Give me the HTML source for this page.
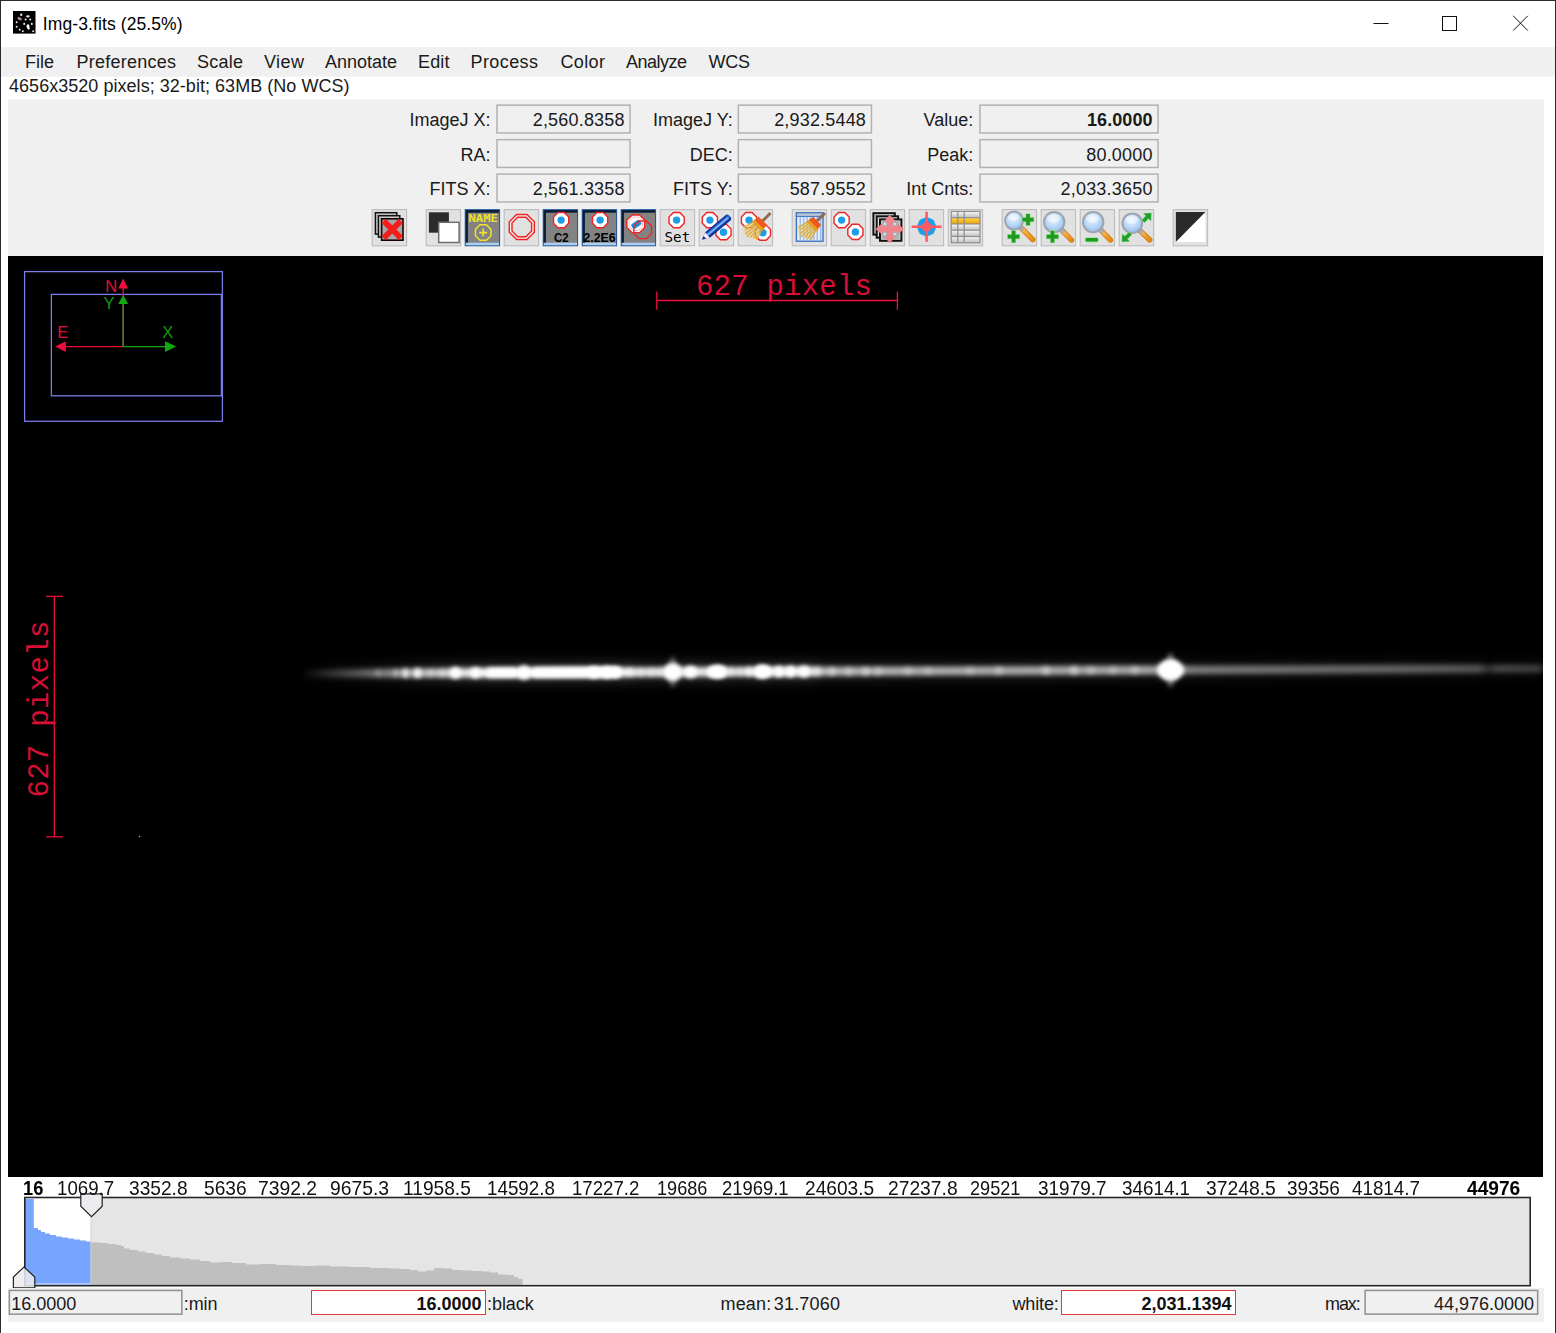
<!DOCTYPE html>
<html lang="en"><head><meta charset="utf-8"><title>Img-3.fits (25.5%)</title>
<style>
html,body{margin:0;padding:0;}
body{width:1556px;height:1333px;overflow:hidden;background:#fff;position:relative;font-family:"Liberation Sans",sans-serif;}
.a{position:absolute;box-sizing:border-box;}
.t{position:absolute;white-space:pre;line-height:1;}
svg{position:absolute;overflow:visible;}
</style></head><body>
<div class="a" style="left:0px;top:0px;width:1556px;height:1333px;background:#fff;border-left:1px solid #2b2b2b;border-top:1px solid #2b2b2b;border-right:1px solid #2b2b2b;"></div><svg style="left:13px;top:11px" width="22.5" height="22.6" viewBox="0 0 22.5 22.6"><rect width="22.5" height="22.6" fill="#000"/>
<g fill="#e4e4e4"><circle cx="8.2" cy="3.7" r="1.2"/><ellipse cx="14.9" cy="5.3" rx="1.9" ry="1.1"/><circle cx="12.6" cy="8.4" r="1"/><circle cx="17.2" cy="8.4" r="1"/><circle cx="3.7" cy="11.3" r="1"/><circle cx="11.2" cy="12.9" r="1.05"/><circle cx="18.8" cy="12.9" r="1.05"/><ellipse cx="15" cy="15.3" rx="1.4" ry="2" fill="#fff"/><ellipse cx="15.6" cy="17.3" rx="1.1" ry="1.4" fill="#fff"/><circle cx="3.7" cy="15.8" r="1"/><circle cx="6.7" cy="18.8" r="1"/><circle cx="9.8" cy="20.3" r="1"/><circle cx="20.2" cy="20.3" r="1"/></g>
<ellipse cx="6.6" cy="7.7" rx="2.3" ry="1.3" fill="#b48c8c" transform="rotate(25 6.6 7.7)"/></svg><svg style="left:0;top:0" width="1556" height="47"><g stroke="#111" stroke-width="1" fill="none">
<path d="M1373.5 23.5H1388.5"/><rect x="1442.5" y="16.5" width="14" height="14"/><path d="M1513.2 15.8L1527.8 30.6M1527.8 15.8L1513.2 30.6"/></g></svg><div class="a" style="left:1px;top:47px;width:1554px;height:29px;background:#f0f0f0;"></div><div class="a" style="left:1px;top:76px;width:1554px;height:1px;background:#f5f5f5;"></div><div class="a" style="left:8px;top:99px;width:1536px;height:157px;background:#f0f0f0;"></div><div class="a" style="left:8px;top:99px;width:1536px;height:1px;background:#f6f6f6;"></div><svg style="left:0;top:0" width="1556" height="1333"><rect x="496.95" y="105.15" width="133.1" height="27.8" fill="#f0f0f0" stroke="#b2b2b2" stroke-width="1.5"/></svg><svg style="left:0;top:0" width="1556" height="1333"><rect x="496.95" y="139.65" width="133.1" height="27.8" fill="#f0f0f0" stroke="#b2b2b2" stroke-width="1.5"/></svg><svg style="left:0;top:0" width="1556" height="1333"><rect x="496.95" y="174.15" width="133.1" height="27.8" fill="#f0f0f0" stroke="#b2b2b2" stroke-width="1.5"/></svg><svg style="left:0;top:0" width="1556" height="1333"><rect x="738.35" y="105.15" width="133.1" height="27.8" fill="#f0f0f0" stroke="#b2b2b2" stroke-width="1.5"/></svg><svg style="left:0;top:0" width="1556" height="1333"><rect x="738.35" y="139.65" width="133.1" height="27.8" fill="#f0f0f0" stroke="#b2b2b2" stroke-width="1.5"/></svg><svg style="left:0;top:0" width="1556" height="1333"><rect x="738.35" y="174.15" width="133.1" height="27.8" fill="#f0f0f0" stroke="#b2b2b2" stroke-width="1.5"/></svg><svg style="left:0;top:0" width="1556" height="1333"><rect x="979.95" y="105.15" width="178.1" height="27.8" fill="#f0f0f0" stroke="#b2b2b2" stroke-width="1.5"/></svg><svg style="left:0;top:0" width="1556" height="1333"><rect x="979.95" y="139.65" width="178.1" height="27.8" fill="#f0f0f0" stroke="#b2b2b2" stroke-width="1.5"/></svg><svg style="left:0;top:0" width="1556" height="1333"><rect x="979.95" y="174.15" width="178.1" height="27.8" fill="#f0f0f0" stroke="#b2b2b2" stroke-width="1.5"/></svg><div class="a" style="left:8px;top:256px;width:1535px;height:921px;background:#000;"></div><svg style="left:0;top:0" width="1556" height="1333" viewBox="0 0 1556 1333">
<defs>
<filter id="b1" x="-5%" y="-300%" width="110%" height="700%"><feGaussianBlur stdDeviation="3 2.7"/></filter>
<filter id="b2" x="-50%" y="-50%" width="200%" height="200%"><feGaussianBlur stdDeviation="2.1"/></filter>
<filter id="b3" x="-50%" y="-50%" width="200%" height="200%"><feGaussianBlur stdDeviation="2.6"/></filter>
<filter id="b4" x="-5%" y="-300%" width="110%" height="700%"><feGaussianBlur stdDeviation="4 8"/></filter>
<linearGradient id="sg" gradientUnits="userSpaceOnUse" x1="300" y1="0" x2="1543" y2="0">
<stop offset="0.0000" stop-color="#fff" stop-opacity="0"/>
<stop offset="0.0161" stop-color="#fff" stop-opacity="0.08"/>
<stop offset="0.0563" stop-color="#fff" stop-opacity="0.28"/>
<stop offset="0.0805" stop-color="#fff" stop-opacity="0.45"/>
<stop offset="0.1126" stop-color="#fff" stop-opacity="0.66"/>
<stop offset="0.1488" stop-color="#fff" stop-opacity="0.95"/>
<stop offset="0.2615" stop-color="#fff" stop-opacity="0.95"/>
<stop offset="0.2735" stop-color="#fff" stop-opacity="0.75"/>
<stop offset="0.2896" stop-color="#fff" stop-opacity="0.75"/>
<stop offset="0.3218" stop-color="#fff" stop-opacity="0.85"/>
<stop offset="0.3540" stop-color="#fff" stop-opacity="0.7"/>
<stop offset="0.3701" stop-color="#fff" stop-opacity="0.9"/>
<stop offset="0.4103" stop-color="#fff" stop-opacity="0.85"/>
<stop offset="0.4224" stop-color="#fff" stop-opacity="0.58"/>
<stop offset="0.4827" stop-color="#fff" stop-opacity="0.54"/>
<stop offset="0.5632" stop-color="#fff" stop-opacity="0.52"/>
<stop offset="0.6838" stop-color="#fff" stop-opacity="0.5"/>
<stop offset="0.7200" stop-color="#fff" stop-opacity="0.34"/>
<stop offset="0.8045" stop-color="#fff" stop-opacity="0.3"/>
<stop offset="0.8850" stop-color="#fff" stop-opacity="0.27"/>
<stop offset="0.9493" stop-color="#fff" stop-opacity="0.22"/>
<stop offset="0.9558" stop-color="#fff" stop-opacity="0.1"/>
<stop offset="0.9622" stop-color="#fff" stop-opacity="0.18"/>
<stop offset="1.0000" stop-color="#fff" stop-opacity="0.15"/>
</linearGradient></defs>
<g transform="rotate(-0.23 450 672.9)">
<rect x="300" y="667.4" width="1243" height="11" fill="url(#sg)" opacity=".35" filter="url(#b4)"/>
<rect x="300" y="668.4" width="1243" height="9" fill="url(#sg)" filter="url(#b1)"/>
<rect x="300" y="670.4" width="1243" height="5" fill="url(#sg)" opacity=".6" filter="url(#b1)"/>
<rect x="486" y="668.3" width="32" height="9.2" rx="4.6" fill="#fff" opacity="1" filter="url(#b2)"/>
<rect x="531" y="667.6999999999999" width="90" height="10.4" rx="5.2" fill="#fff" opacity="1" filter="url(#b2)"/>
<rect x="707" y="667.5" width="20" height="10.8" rx="5.4" fill="#fff" opacity="1" filter="url(#b2)"/>
<rect x="755" y="667.5" width="17" height="10.8" rx="5.4" fill="#fff" opacity="1" filter="url(#b2)"/>
<ellipse cx="378" cy="672.9" rx="2.76" ry="3.69" fill="#fff" opacity="0.25" filter="url(#b2)"/>
<ellipse cx="396" cy="672.9" rx="2.76" ry="3.69" fill="#fff" opacity="0.35" filter="url(#b2)"/>
<ellipse cx="405.5" cy="672.9" rx="3.31" ry="4.43" fill="#fff" opacity="0.8" filter="url(#b2)"/>
<ellipse cx="417.5" cy="672.9" rx="4.23" ry="4.92" fill="#fff" opacity="0.9" filter="url(#b2)"/>
<ellipse cx="430" cy="672.9" rx="2.76" ry="3.69" fill="#fff" opacity="0.3" filter="url(#b2)"/>
<ellipse cx="442" cy="672.9" rx="2.76" ry="3.69" fill="#fff" opacity="0.3" filter="url(#b2)"/>
<ellipse cx="455.5" cy="672.9" rx="5.89" ry="5.90" fill="#fff" opacity="1" filter="url(#b2)"/>
<ellipse cx="475.5" cy="672.9" rx="5.34" ry="5.41" fill="#fff" opacity="1" filter="url(#b2)"/>
<ellipse cx="524" cy="672.9" rx="7.36" ry="7.05" fill="#fff" opacity="1" filter="url(#b2)"/>
<ellipse cx="594" cy="672.9" rx="5.98" ry="5.74" fill="#fff" opacity="1" filter="url(#b2)"/>
<ellipse cx="607" cy="672.9" rx="6.26" ry="5.74" fill="#fff" opacity="1" filter="url(#b2)"/>
<ellipse cx="616" cy="672.9" rx="5.06" ry="5.25" fill="#fff" opacity="1" filter="url(#b2)"/>
<ellipse cx="630" cy="672.9" rx="3.68" ry="4.10" fill="#fff" opacity="0.5" filter="url(#b2)"/>
<ellipse cx="641" cy="672.9" rx="3.68" ry="4.10" fill="#fff" opacity="0.4" filter="url(#b2)"/>
<ellipse cx="651" cy="672.9" rx="3.68" ry="4.10" fill="#fff" opacity="0.45" filter="url(#b2)"/>
<ellipse cx="659" cy="672.9" rx="3.68" ry="4.10" fill="#fff" opacity="0.4" filter="url(#b2)"/>
<ellipse cx="672.7" cy="672.9" rx="9.57" ry="9.02" fill="#fff" opacity="1" filter="url(#b2)"/>
<ellipse cx="690.5" cy="672.9" rx="6.81" ry="6.23" fill="#fff" opacity="1" filter="url(#b2)"/>
<ellipse cx="717.5" cy="672.9" rx="8.28" ry="6.56" fill="#fff" opacity="1" filter="url(#b2)"/>
<ellipse cx="731" cy="672.9" rx="3.68" ry="4.10" fill="#fff" opacity="0.5" filter="url(#b2)"/>
<ellipse cx="740" cy="672.9" rx="3.68" ry="4.10" fill="#fff" opacity="0.4" filter="url(#b2)"/>
<ellipse cx="749" cy="672.9" rx="4.05" ry="4.43" fill="#fff" opacity="0.75" filter="url(#b2)"/>
<ellipse cx="762" cy="672.9" rx="7.36" ry="6.72" fill="#fff" opacity="1" filter="url(#b2)"/>
<ellipse cx="779" cy="672.9" rx="5.34" ry="5.41" fill="#fff" opacity="1" filter="url(#b2)"/>
<ellipse cx="790.5" cy="672.9" rx="5.70" ry="5.58" fill="#fff" opacity="1" filter="url(#b2)"/>
<ellipse cx="804" cy="672.9" rx="6.26" ry="5.74" fill="#fff" opacity="1" filter="url(#b2)"/>
<ellipse cx="817" cy="672.9" rx="3.68" ry="4.43" fill="#fff" opacity="0.5" filter="url(#b2)"/>
<ellipse cx="832" cy="672.9" rx="3.68" ry="4.43" fill="#fff" opacity="0.4" filter="url(#b2)"/>
<ellipse cx="849" cy="672.9" rx="3.68" ry="4.43" fill="#fff" opacity="0.3" filter="url(#b2)"/>
<ellipse cx="866" cy="672.9" rx="3.68" ry="4.43" fill="#fff" opacity="0.4" filter="url(#b2)"/>
<ellipse cx="878" cy="672.9" rx="3.68" ry="4.43" fill="#fff" opacity="0.3" filter="url(#b2)"/>
<ellipse cx="908" cy="672.9" rx="4.60" ry="4.43" fill="#fff" opacity="0.25" filter="url(#b2)"/>
<ellipse cx="928" cy="672.9" rx="4.60" ry="4.43" fill="#fff" opacity="0.2" filter="url(#b2)"/>
<ellipse cx="970" cy="672.9" rx="4.60" ry="4.43" fill="#fff" opacity="0.22" filter="url(#b2)"/>
<ellipse cx="999" cy="672.9" rx="4.60" ry="4.43" fill="#fff" opacity="0.28" filter="url(#b2)"/>
<ellipse cx="1046" cy="672.9" rx="4.60" ry="4.59" fill="#fff" opacity="0.35" filter="url(#b2)"/>
<ellipse cx="1074" cy="672.9" rx="4.60" ry="4.59" fill="#fff" opacity="0.4" filter="url(#b2)"/>
<ellipse cx="1091" cy="672.9" rx="4.60" ry="4.43" fill="#fff" opacity="0.25" filter="url(#b2)"/>
<ellipse cx="1113" cy="672.9" rx="4.60" ry="4.43" fill="#fff" opacity="0.22" filter="url(#b2)"/>
<ellipse cx="1135" cy="672.9" rx="4.60" ry="4.43" fill="#fff" opacity="0.28" filter="url(#b2)"/>
<ellipse cx="1170.5" cy="672.9" rx="12.8" ry="10" fill="#fff" filter="url(#b3)"/>
<path d="M1157.5 672.9L1165 664L1176 664L1183.5 672.9L1176 681.8L1165 681.8Z" fill="#fff" filter="url(#b2)"/>
<ellipse cx="1170.5" cy="672.9" rx="4" ry="17" fill="#fff" opacity=".5" filter="url(#b3)"/>
<ellipse cx="672.7" cy="672.9" rx="3.5" ry="15" fill="#fff" opacity=".45" filter="url(#b3)"/>
</g>
<g fill="none" stroke="#7b7be8" stroke-width="1.3"><rect x="24.6" y="271.6" width="197.8" height="149.7"/><rect x="51.4" y="294.4" width="170" height="101.4"/><path d="M221.8 294.4V395.8"/></g>
<g stroke="#f00f3c" stroke-width="1.4" fill="#f00f3c"><path d="M123.2 346.6V286" fill="none"/><path d="M123.2 346.6H64" fill="none"/><path d="M123.2 278.6L128.2 288.4H118.2Z" stroke="none"/><path d="M55.2 346.6L65.8 341.2V352Z" stroke="none"/></g>
<g stroke="#12a812" stroke-width="1.4" fill="#12a812"><path d="M123.2 346.6V302" fill="none"/><path d="M123.2 346.6H166" fill="none"/><path d="M123.2 295L128.2 304H118.2Z" stroke="none"/><path d="M176.2 346.6L165 341.2V352Z" stroke="none"/></g>
<g stroke="#f00f3c" stroke-width="1.3" fill="none"><path d="M656.8 300.5H897.4M656.8 291.6V309.8M897.4 291.6V309.8"/><path d="M54.3 596.4V836.8M46.2 596.4H63M46.2 836.8H63"/></g>
<circle cx="770" cy="300.3" r="1.5" fill="#f00f3c"/><circle cx="54.3" cy="723" r="1.5" fill="#f00f3c"/>
<circle cx="139.5" cy="836.5" r="0.8" fill="#aaa"/>
<text x="47.8" y="797.6" transform="rotate(-90 47.8 797.6)" font-family="'Liberation Mono', monospace" font-size="29" fill="#d80e36" textLength="177" lengthAdjust="spacing">627 pixels</text>
</svg><div class="a" style="left:24.8px;top:1197.5px;width:1505.4px;height:88px;background:#e5e5e5;"></div><svg style="left:0;top:0" width="1556" height="1333" viewBox="0 0 1556 1333">
<rect x="25" y="1198" width="65.8" height="50" fill="#fff"/>
<polygon points="25,1199 33.8,1199 33.8,1228 38,1228 38,1230 41,1230 41,1232 45,1232 45,1233.5 50,1233.5 50,1235 56,1235 56,1236.5 62,1236.5 62,1237.5 68,1237.5 68,1238.5 74,1238.5 74,1239.5 80,1239.5 80,1240.5 86,1240.5 86,1241.5 90.8,1241.5 90.8,1285 25,1285" fill="#78a5fe"/>
<rect x="25" y="1283" width="65.8" height="2" fill="#a9c6ff"/>
<polygon points="90.8,1242.5 100,1242.5 100,1243 108,1243 108,1244 116,1244 116,1245 121,1245 121,1246 124,1246 124,1248.5 130,1248.5 130,1250 138,1250 138,1251.5 146,1251.5 146,1253 154,1253 154,1254.5 162,1254.5 162,1256 170,1256 170,1257.5 180,1257.5 180,1258.5 190,1258.5 190,1259.5 200,1259.5 200,1261 210,1261 210,1262.5 220,1262.5 220,1262 232,1262 232,1263 246,1263 246,1264.5 260,1264.5 260,1264 276,1264 276,1265 290,1265 290,1265.5 300,1265.5 300,1266 316,1266 316,1265.5 330,1265.5 330,1266.5 350,1266.5 350,1267 370,1267 370,1268 389,1268 389,1268.5 400,1268.5 400,1269 410,1269 410,1270 418,1270 418,1271.5 426,1271.5 426,1270.5 434,1270.5 434,1268 444,1268 444,1268.5 452,1268.5 452,1270 462,1270 462,1270.5 472,1270.5 472,1271 482,1271 482,1271.5 490,1271.5 490,1272.5 498,1272.5 498,1274.5 506,1274.5 506,1275 514,1275 514,1277 518,1277 518,1279 522.5,1279 522.5,1279 522.5,1285 90.8,1285" fill="#bfbfbf"/>
<rect x="90.4" y="1217" width="1" height="68" fill="#cfcfcf" opacity=".8"/>
<rect x="24.8" y="1197.5" width="1505.4" height="88.2" fill="none" stroke="#262626" stroke-width="1.6"/>
<path d="M80.8 1193.9H102.2V1206.2L91.5 1216.6L80.8 1206.2Z" fill="#ececf0" stroke="#222" stroke-width="1.2" stroke-linejoin="miter"/>
<path d="M13.4 1287.9H34.8V1277L24 1267L13.4 1277Z" fill="#ececf0" fill-opacity=".86" stroke="#222" stroke-width="1.2" stroke-linejoin="miter"/>
</svg><div class="a" style="left:8px;top:1288px;width:1536px;height:34px;background:#f0f0f0;"></div><svg style="left:0;top:0" width="1556" height="1333"><rect x="9.35" y="1290.45" width="172.5" height="23.7" fill="#f0f0f0" stroke="#8f8f8f" stroke-width="1.5"/></svg><div class="a" style="left:311px;top:1289.5px;width:175px;height:25.5px;background:#fff;border:1px solid #e03a3a;"></div><div class="a" style="left:1061px;top:1289.5px;width:174.5px;height:25.5px;background:#fff;border:1px solid #e03a3a;"></div><svg style="left:0;top:0" width="1556" height="1333"><rect x="1365.15" y="1290.45" width="172.5" height="23.7" fill="#f0f0f0" stroke="#8f8f8f" stroke-width="1.5"/></svg><svg style="left:0;top:0" width="1556" height="300" viewBox="0 0 1556 300">
<rect x="372.2" y="209.6" width="34.4" height="36.2" fill="#e1e1e1" stroke="#bcbcbc" stroke-width="1.1"/>
<rect x="426.2" y="209.6" width="34.4" height="36.2" fill="#e1e1e1" stroke="#bcbcbc" stroke-width="1.1"/>
<rect x="464.7" y="209.1" width="35.4" height="37.2" fill="#1f5fa6"/>
<rect x="465.7" y="210.1" width="33.4" height="35.2" fill="#0b1c33"/>
<rect x="467.9" y="212.7" width="31.2" height="32.6" fill="#838383"/>
<rect x="465.7" y="242.70000000000002" width="33.4" height="2.6" fill="#a9cdf3"/>
<rect x="504.2" y="209.6" width="34.4" height="36.2" fill="#e1e1e1" stroke="#bcbcbc" stroke-width="1.1"/>
<rect x="542.7" y="209.1" width="35.4" height="37.2" fill="#1f5fa6"/>
<rect x="543.7" y="210.1" width="33.4" height="35.2" fill="#0b1c33"/>
<rect x="545.9000000000001" y="212.7" width="31.2" height="32.6" fill="#838383"/>
<rect x="543.7" y="242.70000000000002" width="33.4" height="2.6" fill="#a9cdf3"/>
<rect x="581.7" y="209.1" width="35.4" height="37.2" fill="#1f5fa6"/>
<rect x="582.7" y="210.1" width="33.4" height="35.2" fill="#0b1c33"/>
<rect x="584.9000000000001" y="212.7" width="31.2" height="32.6" fill="#838383"/>
<rect x="582.7" y="242.70000000000002" width="33.4" height="2.6" fill="#a9cdf3"/>
<rect x="620.7" y="209.1" width="35.4" height="37.2" fill="#1f5fa6"/>
<rect x="621.7" y="210.1" width="33.4" height="35.2" fill="#0b1c33"/>
<rect x="623.9000000000001" y="212.7" width="31.2" height="32.6" fill="#838383"/>
<rect x="621.7" y="242.70000000000002" width="33.4" height="2.6" fill="#a9cdf3"/>
<rect x="660.2" y="209.6" width="34.4" height="36.2" fill="#e1e1e1" stroke="#bcbcbc" stroke-width="1.1"/>
<rect x="699.2" y="209.6" width="34.4" height="36.2" fill="#e1e1e1" stroke="#bcbcbc" stroke-width="1.1"/>
<rect x="738.2" y="209.6" width="34.4" height="36.2" fill="#e1e1e1" stroke="#bcbcbc" stroke-width="1.1"/>
<rect x="792.2" y="209.6" width="34.4" height="36.2" fill="#e1e1e1" stroke="#bcbcbc" stroke-width="1.1"/>
<rect x="831.2" y="209.6" width="34.4" height="36.2" fill="#e1e1e1" stroke="#bcbcbc" stroke-width="1.1"/>
<rect x="870.2" y="209.6" width="34.4" height="36.2" fill="#e1e1e1" stroke="#bcbcbc" stroke-width="1.1"/>
<rect x="909.2" y="209.6" width="34.4" height="36.2" fill="#e1e1e1" stroke="#bcbcbc" stroke-width="1.1"/>
<rect x="948.2" y="209.6" width="34.4" height="36.2" fill="#e1e1e1" stroke="#bcbcbc" stroke-width="1.1"/>
<rect x="1002.2" y="209.6" width="34.4" height="36.2" fill="#e1e1e1" stroke="#bcbcbc" stroke-width="1.1"/>
<rect x="1041.2" y="209.6" width="34.4" height="36.2" fill="#e1e1e1" stroke="#bcbcbc" stroke-width="1.1"/>
<rect x="1080.2" y="209.6" width="34.4" height="36.2" fill="#e1e1e1" stroke="#bcbcbc" stroke-width="1.1"/>
<rect x="1119.2" y="209.6" width="34.4" height="36.2" fill="#e1e1e1" stroke="#bcbcbc" stroke-width="1.1"/>
<rect x="1173.2" y="209.6" width="34.4" height="36.2" fill="#e1e1e1" stroke="#bcbcbc" stroke-width="1.1"/>
</svg><svg style="left:0;top:0" width="1556" height="300" viewBox="0 0 1556 300">
<defs>
<radialGradient id="lens" cx=".45" cy=".35" r=".7"><stop offset="0" stop-color="#e8f3ff"/><stop offset=".55" stop-color="#b9d8f8"/><stop offset="1" stop-color="#8db8ea"/></radialGradient>
<linearGradient id="hand" x1="0" y1="0" x2="1" y2="1"><stop offset="0" stop-color="#f6c26a"/><stop offset="1" stop-color="#e88a10"/></linearGradient>
<linearGradient id="pen" x1="0" y1="0" x2="0" y2="1"><stop offset="0" stop-color="#0a2290"/><stop offset=".4" stop-color="#2f6fdc"/><stop offset="1" stop-color="#081a80"/></linearGradient>
<linearGradient id="cell" x1="0" y1="0" x2="0" y2="1"><stop offset="0" stop-color="#f2f2f2"/><stop offset="1" stop-color="#c4c4c4"/></linearGradient>
<linearGradient id="ycell" x1="0" y1="0" x2="0" y2="1"><stop offset="0" stop-color="#ffd24a"/><stop offset="1" stop-color="#f0a800"/></linearGradient>
</defs>
<rect x="375.4" y="212.7" width="21.4" height="21.4" fill="#c9c9c9" stroke="#111" stroke-width="1.5"/>
<rect x="378.4" y="215.7" width="21.4" height="21.4" fill="#c9c9c9" stroke="#111" stroke-width="1.5"/>
<rect x="381.6" y="218.8" width="21.4" height="21.4" fill="#a8a8a8" stroke="#1a0000" stroke-width="1.6"/>
<path d="M383.8 221L400.8 238M400.8 221L383.8 238" stroke="#f51c1c" stroke-width="6" fill="none"/>
<rect x="428.9" y="212.3" width="20" height="20.4" fill="#2b2b2b"/>
<rect x="438.7" y="222.3" width="20.4" height="20.2" fill="#fff" stroke="#6e6e6e" stroke-width="1.5"/>
<text x="468.4" y="221.6" font-family="'DejaVu Sans Mono', 'Liberation Mono', monospace" font-weight="700" font-size="10.5" fill="#ece32a" textLength="29.5" lengthAdjust="spacingAndGlyphs">NAME</text>
<polygon points="490.96,235.81 486.41,240.36 479.99,240.36 475.44,235.81 475.44,229.39 479.99,224.84 486.41,224.84 490.96,229.39" fill="none" stroke="#ece32a" stroke-width="1.5"/>
<path d="M479.2 232.6H487.2M483.2 228.6V236.6" stroke="#ece32a" stroke-width="1.6"/>
<polygon points="534.36,232.20 527.00,239.56 516.60,239.56 509.24,232.20 509.24,221.80 516.60,214.44 527.00,214.44 534.36,221.80" fill="#f6eeee" stroke="#f02222" stroke-width="1.4"/>
<polygon points="531.59,231.06 525.86,236.79 517.74,236.79 512.01,231.06 512.01,222.94 517.74,217.21 525.86,217.21 531.59,222.94" fill="#e1e1e1" stroke="#f02222" stroke-width="1.4"/>
<polygon points="568.68,223.24 564.24,227.68 557.96,227.68 553.52,223.24 553.52,216.96 557.96,212.52 564.24,212.52 568.68,216.96" fill="#fff" stroke="#f02222" stroke-width="1.4"/><circle cx="561.1" cy="220.1" r="3.7" fill="#1c9de6"/>
<text x="554" y="241.7" font-family="'Liberation Sans', sans-serif" font-size="13" font-weight="700" fill="#000" textLength="14.6" lengthAdjust="spacingAndGlyphs">C2</text>
<polygon points="607.68,223.24 603.24,227.68 596.96,227.68 592.52,223.24 592.52,216.96 596.96,212.52 603.24,212.52 607.68,216.96" fill="#fff" stroke="#f02222" stroke-width="1.4"/><circle cx="600.1" cy="220.1" r="3.7" fill="#1c9de6"/>
<text x="583.4" y="241.7" font-family="'Liberation Sans', sans-serif" font-size="13" font-weight="700" fill="#000" textLength="32.2" lengthAdjust="spacingAndGlyphs">2.2E6</text>
<polygon points="644.67,227.47 639.47,232.67 632.13,232.67 626.93,227.47 626.93,220.13 632.13,214.93 639.47,214.93 644.67,220.13" fill="#fff" stroke="#f02222" stroke-width="1.4"/>
<polygon points="642.45,226.56 638.56,230.45 633.04,230.45 629.15,226.56 629.15,221.04 633.04,217.15 638.56,217.15 642.45,221.04" fill="none" stroke="#f88" stroke-width="0.6"/>
<rect x="631.3" y="221.6" width="10" height="5.6" rx="1.5" fill="#1c8fe0" transform="rotate(-35 636.3 224.4)"/>
<polygon points="651.57,233.47 646.37,238.67 639.03,238.67 633.83,233.47 633.83,226.13 639.03,220.93 646.37,220.93 651.57,226.13" fill="none" stroke="#f02222" stroke-width="1.4"/>
<polygon points="684.18,223.24 679.74,227.68 673.46,227.68 669.02,223.24 669.02,216.96 673.46,212.52 679.74,212.52 684.18,216.96" fill="#fff" stroke="#f02222" stroke-width="1.4"/><circle cx="676.6" cy="220.1" r="3.7" fill="#1c9de6"/>
<text x="664.6" y="241.6" font-family="'DejaVu Sans Mono', 'Liberation Mono', monospace" font-size="13.5" fill="#000" textLength="25.6" lengthAdjust="spacingAndGlyphs">Set</text>
<polygon points="717.48,223.24 713.04,227.68 706.76,227.68 702.32,223.24 702.32,216.96 706.76,212.52 713.04,212.52 717.48,216.96" fill="#fff" stroke="#f02222" stroke-width="1.4"/><circle cx="709.9" cy="220.1" r="3.7" fill="#1c9de6"/>
<polygon points="731.08,235.34 726.64,239.78 720.36,239.78 715.92,235.34 715.92,229.06 720.36,224.62 726.64,224.62 731.08,229.06" fill="#fff" stroke="#f02222" stroke-width="1.4"/><circle cx="723.5" cy="232.2" r="3.7" fill="#1c9de6"/>
<g transform="translate(702.1 239.6) rotate(-40)"><path d="M0 0L7 -3.6H33.5Q36.5 -3.6 36.5 0Q36.5 3.6 33.5 3.6H7Z" fill="url(#pen)"/><path d="M7 -1H34V1H7Z" fill="#8cc4ff" opacity=".8"/><path d="M0 0L7 -3.6V3.6Z" fill="#f4f4ff"/><path d="M0 0L3.5 -1.8V1.8Z" fill="#0a1f8c"/></g>
<polygon points="756.58,223.24 752.14,227.68 745.86,227.68 741.42,223.24 741.42,216.96 745.86,212.52 752.14,212.52 756.58,216.96" fill="#fff" stroke="#f02222" stroke-width="1.4"/><circle cx="749" cy="220.1" r="3.7" fill="#1c9de6"/>
<polygon points="770.48,235.84 766.04,240.28 759.76,240.28 755.32,235.84 755.32,229.56 759.76,225.12 766.04,225.12 770.48,229.56" fill="#fff" stroke="#f02222" stroke-width="1.4"/><circle cx="762.9" cy="232.7" r="3.7" fill="#1c9de6"/>
<g transform="translate(759.6 224) scale(1.14) rotate(45)"><rect x="-1.3" y="-13.6" width="2.6" height="11" fill="#8c6d50"/><path d="M-5 3L-8.5 12.5L-4 15.5L3 15L8 12L5 3Z" fill="#e9cf7a" opacity=".55"/><path d="M-5.00 2L-7.75 11.8" stroke="#d9a93c" stroke-width="1.1"/><path d="M-3.33 2L-5.16 12.7" stroke="#d9a93c" stroke-width="1.1"/><path d="M-1.66 2L-2.57 15.1" stroke="#d9a93c" stroke-width="1.1"/><path d="M0.01 2L0.02 16.0" stroke="#d9a93c" stroke-width="1.1"/><path d="M1.68 2L2.60 13.6" stroke="#d9a93c" stroke-width="1.1"/><path d="M3.35 2L5.19 12.7" stroke="#d9a93c" stroke-width="1.1"/><path d="M5.02 2L7.78 11.8" stroke="#d9a93c" stroke-width="1.1"/><path d="M-5 -4H5L6 3H-6Z" fill="#ee5a1e"/><path d="M-5.6 0.5H5.6L6 3H-6Z" fill="#eaa21c"/></g>
<rect x="796.4" y="212.8" width="26.6" height="28.4" fill="#e9eef6" stroke="#3a72c4" stroke-width="1.4"/>
<rect x="796.4" y="212.8" width="26.6" height="3.6" fill="#b9c4d4" stroke="#3a72c4" stroke-width="1"/>
<rect x="799.5" y="217" width="1.5" height="23.5" fill="#9dbbe8"/>
<rect x="802.9" y="217" width="1.5" height="23.5" fill="#9dbbe8"/>
<rect x="806.3" y="217" width="1.5" height="23.5" fill="#9dbbe8"/>
<rect x="809.7" y="217" width="1.5" height="23.5" fill="#9dbbe8"/>
<rect x="813.1" y="217" width="1.5" height="23.5" fill="#9dbbe8"/>
<rect x="816.5" y="217" width="1.5" height="23.5" fill="#9dbbe8"/>
<rect x="819.9" y="217" width="1.5" height="23.5" fill="#9dbbe8"/>
<g transform="translate(814 224) scale(1.14) rotate(45)"><rect x="-1.3" y="-13.6" width="2.6" height="11" fill="#8c6d50"/><path d="M-5 3L-8.5 12.5L-4 15.5L3 15L8 12L5 3Z" fill="#e9cf7a" opacity=".55"/><path d="M-5.00 2L-7.75 11.8" stroke="#d9a93c" stroke-width="1.1"/><path d="M-3.33 2L-5.16 12.7" stroke="#d9a93c" stroke-width="1.1"/><path d="M-1.66 2L-2.57 15.1" stroke="#d9a93c" stroke-width="1.1"/><path d="M0.01 2L0.02 16.0" stroke="#d9a93c" stroke-width="1.1"/><path d="M1.68 2L2.60 13.6" stroke="#d9a93c" stroke-width="1.1"/><path d="M3.35 2L5.19 12.7" stroke="#d9a93c" stroke-width="1.1"/><path d="M5.02 2L7.78 11.8" stroke="#d9a93c" stroke-width="1.1"/><path d="M-5 -4H5L6 3H-6Z" fill="#ee5a1e"/><path d="M-5.6 0.5H5.6L6 3H-6Z" fill="#eaa21c"/></g>
<polygon points="849.18,223.24 844.74,227.68 838.46,227.68 834.02,223.24 834.02,216.96 838.46,212.52 844.74,212.52 849.18,216.96" fill="#fff" stroke="#f02222" stroke-width="1.4"/><circle cx="841.6" cy="220.1" r="3.7" fill="#1c9de6"/>
<polygon points="862.98,235.04 858.54,239.48 852.26,239.48 847.82,235.04 847.82,228.76 852.26,224.32 858.54,224.32 862.98,228.76" fill="#fff" stroke="#f02222" stroke-width="1.4"/><circle cx="855.4" cy="231.9" r="3.7" fill="#1c9de6"/>
<rect x="873.4" y="213.2" width="21.4" height="21.4" fill="#dcdcdc" stroke="#111" stroke-width="2"/>
<rect x="876.6999999999999" y="216.29999999999998" width="21.4" height="21.4" fill="#dcdcdc" stroke="#111" stroke-width="2"/>
<rect x="880.0" y="219.39999999999998" width="21.4" height="21.4" fill="#dcdcdc" stroke="#111" stroke-width="2"/>
<rect x="881.5" y="220.9" width="18" height="18" fill="#a9b4b4"/>
<path d="M889.8 214.8L895.8 221.60000000000002H892.5999999999999V226.2H897.2V223L904.0 229L897.2 235V231.8H892.5999999999999V236.39999999999998H895.8L889.8 243.2L883.8 236.39999999999998H887.0V231.8H882.3999999999999V235L875.5999999999999 229L882.3999999999999 223V226.2H887.0V221.60000000000002H883.8Z" fill="#f2828c"/>
<circle cx="884.8" cy="224" r="1.1" fill="#eef"/>
<circle cx="894.8" cy="224" r="1.1" fill="#eef"/>
<circle cx="884.8" cy="234" r="1.1" fill="#eef"/>
<circle cx="894.8" cy="234" r="1.1" fill="#eef"/>
<polygon points="936.20,226.80 933.39,233.59 926.60,236.40 919.81,233.59 917.00,226.80 919.81,220.01 926.60,217.20 933.39,220.01" fill="#1c9de6" stroke="#1c9de6" stroke-width="0.5"/>
<path d="M911.6 226.8H941.6M926.6 211.8V241.8" stroke="#ff5a64" stroke-width="2.6"/>
<path d="M926.6 220.3L933.1 226.8L926.6 233.3L920.1 226.8Z" fill="#ff5a64"/>
<rect x="950.6" y="210.8" width="30" height="32.6" fill="#8e8e8e"/>
<rect x="951.80" y="212.00" width="5.4" height="5.08" fill="url(#cell)"/>
<rect x="958.40" y="212.00" width="5.2" height="5.08" fill="url(#cell)"/>
<rect x="964.80" y="212.00" width="14.6" height="5.08" fill="url(#cell)"/>
<rect x="951.80" y="218.28" width="5.4" height="5.08" fill="url(#ycell)"/>
<rect x="958.40" y="218.28" width="5.2" height="5.08" fill="url(#ycell)"/>
<rect x="964.80" y="218.28" width="14.6" height="5.08" fill="url(#ycell)"/>
<rect x="951.80" y="224.56" width="5.4" height="5.08" fill="url(#cell)"/>
<rect x="958.40" y="224.56" width="5.2" height="5.08" fill="url(#cell)"/>
<rect x="964.80" y="224.56" width="14.6" height="5.08" fill="url(#cell)"/>
<rect x="951.80" y="230.84" width="5.4" height="5.08" fill="url(#cell)"/>
<rect x="958.40" y="230.84" width="5.2" height="5.08" fill="url(#cell)"/>
<rect x="964.80" y="230.84" width="14.6" height="5.08" fill="url(#cell)"/>
<rect x="951.80" y="237.12" width="5.4" height="5.08" fill="url(#cell)"/>
<rect x="958.40" y="237.12" width="5.2" height="5.08" fill="url(#cell)"/>
<rect x="964.80" y="237.12" width="14.6" height="5.08" fill="url(#cell)"/>
<path d="M1020.76 227.37L1032.80 239.60" stroke="#d07a10" stroke-width="5.4" stroke-linecap="round"/><path d="M1020.76 227.37L1032.80 239.60" stroke="url(#hand)" stroke-width="3.8" stroke-linecap="round"/><path d="M1019.76 226.37L1023.26 229.87" stroke="#a9a9b0" stroke-width="4"/><circle cx="1014.1" cy="220.6" r="9" fill="url(#lens)" stroke="#9ea3ad" stroke-width="2"/><ellipse cx="1013.6" cy="217.45" rx="5.58" ry="3.78" fill="#fff" opacity=".45"/>
<path d="M1026.2 214.0H1029.8V217.79999999999998H1033.6V221.4H1029.8V225.2H1026.2V221.4H1022.4V217.79999999999998H1026.2Z" fill="#1f9a1f" stroke="#9be09b" stroke-width="1.6" stroke-linejoin="round" paint-order="stroke"/>
<path d="M1011.8000000000001 230.79999999999998H1015.4V234.79999999999998H1019.4V238.4H1015.4V242.4H1011.8000000000001V238.4H1007.8000000000001V234.79999999999998H1011.8000000000001Z" fill="#1f9a1f" stroke="#9be09b" stroke-width="1.6" stroke-linejoin="round" paint-order="stroke"/>
<path d="M1061.61 229.82L1071.40 240.00" stroke="#d07a10" stroke-width="5.4" stroke-linecap="round"/><path d="M1061.61 229.82L1071.40 240.00" stroke="url(#hand)" stroke-width="3.8" stroke-linecap="round"/><path d="M1060.61 228.82L1064.11 232.32" stroke="#a9a9b0" stroke-width="4"/><circle cx="1054.2" cy="222.1" r="10.2" fill="url(#lens)" stroke="#9ea3ad" stroke-width="2"/><ellipse cx="1053.7" cy="218.53" rx="6.324" ry="4.284" fill="#fff" opacity=".45"/>
<path d="M1050.7 230.79999999999998H1054.3V234.79999999999998H1058.3V238.4H1054.3V242.4H1050.7V238.4H1046.7V234.79999999999998H1050.7Z" fill="#1f9a1f" stroke="#9be09b" stroke-width="1.6" stroke-linejoin="round" paint-order="stroke"/>
<path d="M1100.61 229.82L1110.40 240.00" stroke="#d07a10" stroke-width="5.4" stroke-linecap="round"/><path d="M1100.61 229.82L1110.40 240.00" stroke="url(#hand)" stroke-width="3.8" stroke-linecap="round"/><path d="M1099.61 228.82L1103.11 232.32" stroke="#a9a9b0" stroke-width="4"/><circle cx="1093.2" cy="222.1" r="10.2" fill="url(#lens)" stroke="#9ea3ad" stroke-width="2"/><ellipse cx="1092.7" cy="218.53" rx="6.324" ry="4.284" fill="#fff" opacity=".45"/>
<rect x="1085.6" y="238" width="12.4" height="3.6" rx="1" fill="#1f9a1f" stroke="#9be09b" stroke-width="1.6" paint-order="stroke"/>
<path d="M1139.73 230.33L1149.80 240.00" stroke="#d07a10" stroke-width="5.4" stroke-linecap="round"/><path d="M1139.73 230.33L1149.80 240.00" stroke="url(#hand)" stroke-width="3.8" stroke-linecap="round"/><path d="M1138.73 229.33L1142.23 232.83" stroke="#a9a9b0" stroke-width="4"/><circle cx="1132.3" cy="223.2" r="9.8" fill="url(#lens)" stroke="#9ea3ad" stroke-width="2"/><ellipse cx="1131.8" cy="219.76999999999998" rx="6.0760000000000005" ry="4.1160000000000005" fill="#fff" opacity=".45"/>
<g transform="translate(1143.2 221.2) rotate(-45.0)"><path d="M0 -1.7H5.8V-5L11.3 0L5.8 5V1.7H0Z" fill="#1fa02a" stroke="#8fdc8f" stroke-width="1.2" stroke-linejoin="round" paint-order="stroke"/></g>
<g transform="translate(1130.4 233.4) rotate(135.7)"><path d="M0 -1.7H6.2V-5L11.7 0L6.2 5V1.7H0Z" fill="#1fa02a" stroke="#8fdc8f" stroke-width="1.2" stroke-linejoin="round" paint-order="stroke"/></g>
<rect x="1175.8" y="212" width="29.6" height="30" fill="#fff"/>
<path d="M1175.8 212H1205.4L1175.8 242Z" fill="#2a2a2c"/>
</svg><span class="t" id="t0" style="top:16.40px;font-size:17.5px;color:#000;letter-spacing:0.099px;left:42.8px;">Img-3.fits (25.5%)</span>
<span class="t" id="t1" style="top:53.00px;font-size:18px;color:#1a1a1a;letter-spacing:-0.005px;left:25px;">File</span>
<span class="t" id="t2" style="top:53.00px;font-size:18px;color:#1a1a1a;letter-spacing:0.244px;left:76.5px;">Preferences</span>
<span class="t" id="t3" style="top:53.00px;font-size:18px;color:#1a1a1a;letter-spacing:0.242px;left:197px;">Scale</span>
<span class="t" id="t4" style="top:53.00px;font-size:18px;color:#1a1a1a;letter-spacing:0.432px;left:264px;">View</span>
<span class="t" id="t5" style="top:53.00px;font-size:18px;color:#1a1a1a;letter-spacing:-0.009px;left:325px;">Annotate</span>
<span class="t" id="t6" style="top:53.00px;font-size:18px;color:#1a1a1a;letter-spacing:0.156px;left:418px;">Edit</span>
<span class="t" id="t7" style="top:53.00px;font-size:18px;color:#1a1a1a;letter-spacing:0.411px;left:470.5px;">Process</span>
<span class="t" id="t8" style="top:53.00px;font-size:18px;color:#1a1a1a;letter-spacing:0.371px;left:560.5px;">Color</span>
<span class="t" id="t9" style="top:53.00px;font-size:18px;color:#1a1a1a;letter-spacing:-0.508px;left:626px;">Analyze</span>
<span class="t" id="t10" style="top:53.00px;font-size:18px;color:#1a1a1a;letter-spacing:-0.250px;left:708.5px;">WCS</span>
<span class="t" id="t11" style="top:77.00px;font-size:18px;color:#1a1a1a;letter-spacing:0.035px;left:9px;">4656x3520 pixels; 32-bit; 63MB (No WCS)</span>
<span class="t" id="t12" style="top:111.30px;font-size:18px;color:#1a1a1a;left:490.5px;transform:translateX(-100%);">ImageJ X:</span>
<span class="t" id="t13" style="top:111.30px;font-size:18px;color:#1a1a1a;letter-spacing:0.184px;left:624.5px;transform:translateX(-100%);margin-left:0.184px;">2,560.8358</span>
<span class="t" id="t14" style="top:145.80px;font-size:18px;color:#1a1a1a;left:490.5px;transform:translateX(-100%);">RA:</span>
<span class="t" id="t15" style="top:180.20px;font-size:18px;color:#1a1a1a;left:490.5px;transform:translateX(-100%);">FITS X:</span>
<span class="t" id="t16" style="top:180.20px;font-size:18px;color:#1a1a1a;letter-spacing:0.184px;left:624.5px;transform:translateX(-100%);margin-left:0.184px;">2,561.3358</span>
<span class="t" id="t17" style="top:111.30px;font-size:18px;color:#1a1a1a;left:732.8px;transform:translateX(-100%);">ImageJ Y:</span>
<span class="t" id="t18" style="top:111.30px;font-size:18px;color:#1a1a1a;letter-spacing:0.184px;left:865.9000000000001px;transform:translateX(-100%);margin-left:0.184px;">2,932.5448</span>
<span class="t" id="t19" style="top:145.80px;font-size:18px;color:#1a1a1a;left:732.8px;transform:translateX(-100%);">DEC:</span>
<span class="t" id="t20" style="top:180.20px;font-size:18px;color:#1a1a1a;left:732.8px;transform:translateX(-100%);">FITS Y:</span>
<span class="t" id="t21" style="top:180.20px;font-size:18px;color:#1a1a1a;letter-spacing:0.167px;left:865.9000000000001px;transform:translateX(-100%);margin-left:0.167px;">587.9552</span>
<span class="t" id="t22" style="top:111.30px;font-size:18px;color:#1a1a1a;left:973.3px;transform:translateX(-100%);">Value:</span>
<span class="t" id="t23" style="top:111.30px;font-size:18px;color:#1a1a1a;font-weight:700;letter-spacing:0.070px;left:1152.5px;transform:translateX(-100%);margin-left:0.070px;">16.0000</span>
<span class="t" id="t24" style="top:145.80px;font-size:18px;color:#1a1a1a;left:973.3px;transform:translateX(-100%);">Peak:</span>
<span class="t" id="t25" style="top:145.80px;font-size:18px;color:#1a1a1a;letter-spacing:0.195px;left:1152.5px;transform:translateX(-100%);margin-left:0.195px;">80.0000</span>
<span class="t" id="t26" style="top:180.20px;font-size:18px;color:#1a1a1a;left:973.3px;transform:translateX(-100%);">Int Cnts:</span>
<span class="t" id="t27" style="top:180.20px;font-size:18px;color:#1a1a1a;letter-spacing:0.212px;left:1152.5px;transform:translateX(-100%);margin-left:0.212px;">2,033.3650</span>
<span class="t" id="t28" style="top:273.20px;font-size:29px;color:#d80e36;font-family:'Liberation Mono', monospace;letter-spacing:0.219px;left:696px;">627 pixels</span>
<span class="t" id="t29" style="top:278.20px;font-size:16.5px;color:#e00e38;left:105.3px;">N</span>
<span class="t" id="t30" style="top:295.40px;font-size:16.5px;color:#109a10;left:103.6px;">Y</span>
<span class="t" id="t31" style="top:324.00px;font-size:16.5px;color:#e00e38;left:57.3px;">E</span>
<span class="t" id="t32" style="top:324.00px;font-size:16.5px;color:#109a10;left:162.2px;">X</span>
<span class="t" id="t33" style="top:1176.80px;font-size:21px;color:#000;font-weight:700;transform:scaleX(0.8712);transform-origin:0 0;left:23.45px;">16</span>
<span class="t" id="t34" style="top:1176.80px;font-size:21px;color:#111;transform:scaleX(0.8889);transform-origin:0 0;left:56.7px;">1069.7</span>
<span class="t" id="t35" style="top:1176.80px;font-size:21px;color:#111;transform:scaleX(0.9123);transform-origin:0 0;left:129.2px;">3352.8</span>
<span class="t" id="t36" style="top:1176.80px;font-size:21px;color:#111;transform:scaleX(0.9118);transform-origin:0 0;left:203.7px;">5636</span>
<span class="t" id="t37" style="top:1176.80px;font-size:21px;color:#111;transform:scaleX(0.9201);transform-origin:0 0;left:257.95px;">7392.2</span>
<span class="t" id="t38" style="top:1176.80px;font-size:21px;color:#111;transform:scaleX(0.9201);transform-origin:0 0;left:330.45px;">9675.3</span>
<span class="t" id="t39" style="top:1176.80px;font-size:21px;color:#111;transform:scaleX(0.9125);transform-origin:0 0;left:403.45px;">11958.5</span>
<span class="t" id="t40" style="top:1176.80px;font-size:21px;color:#111;transform:scaleX(0.8937);transform-origin:0 0;left:487.2px;">14592.8</span>
<span class="t" id="t41" style="top:1176.80px;font-size:21px;color:#111;transform:scaleX(0.8871);transform-origin:0 0;left:571.7px;">17227.2</span>
<span class="t" id="t42" style="top:1176.80px;font-size:21px;color:#111;transform:scaleX(0.8621);transform-origin:0 0;left:657.2px;">19686</span>
<span class="t" id="t43" style="top:1176.80px;font-size:21px;color:#111;transform:scaleX(0.8772);transform-origin:0 0;left:721.7px;">21969.1</span>
<span class="t" id="t44" style="top:1176.80px;font-size:21px;color:#111;transform:scaleX(0.9101);transform-origin:0 0;left:805.45px;">24603.5</span>
<span class="t" id="t45" style="top:1176.80px;font-size:21px;color:#111;transform:scaleX(0.9167);transform-origin:0 0;left:887.95px;">27237.8</span>
<span class="t" id="t46" style="top:1176.80px;font-size:21px;color:#111;transform:scaleX(0.8621);transform-origin:0 0;left:970.45px;">29521</span>
<span class="t" id="t47" style="top:1176.80px;font-size:21px;color:#111;transform:scaleX(0.9036);transform-origin:0 0;left:1037.95px;">31979.7</span>
<span class="t" id="t48" style="top:1176.80px;font-size:21px;color:#111;transform:scaleX(0.8970);transform-origin:0 0;left:1122.2px;">34614.1</span>
<span class="t" id="t49" style="top:1176.80px;font-size:21px;color:#111;transform:scaleX(0.9194);transform-origin:0 0;left:1205.5px;">37248.5</span>
<span class="t" id="t50" style="top:1176.80px;font-size:21px;color:#111;transform:scaleX(0.9057);transform-origin:0 0;left:1287.1000000000001px;">39356</span>
<span class="t" id="t51" style="top:1176.80px;font-size:21px;color:#111;transform:scaleX(0.8943);transform-origin:0 0;left:1352.3px;">41814.7</span>
<span class="t" id="t52" style="top:1176.80px;font-size:21px;color:#000;font-weight:700;transform:scaleX(0.9109);transform-origin:0 0;left:1466.7px;">44976</span>
<span class="t" id="t53" style="top:1294.60px;font-size:18px;color:#1a1a1a;letter-spacing:-0.013px;left:11.25px;">16.0000</span>
<span class="t" id="t54" style="top:1294.60px;font-size:18px;color:#1a1a1a;letter-spacing:-0.089px;left:183.75px;">:min</span>
<span class="t" id="t55" style="top:1294.60px;font-size:18px;color:#111;font-weight:700;left:481.5px;transform:translateX(-100%);">16.0000</span>
<span class="t" id="t56" style="top:1294.60px;font-size:18px;color:#1a1a1a;letter-spacing:-0.056px;left:487px;">:black</span>
<span class="t" id="t57" style="top:1294.60px;font-size:18px;color:#1a1a1a;letter-spacing:0.180px;left:720.5px;">mean:</span>
<span class="t" id="t58" style="top:1294.60px;font-size:18px;color:#1a1a1a;letter-spacing:0.195px;left:773.75px;">31.7060</span>
<span class="t" id="t59" style="top:1294.60px;font-size:18px;color:#1a1a1a;letter-spacing:-0.156px;left:1012.5px;">white:</span>
<span class="t" id="t60" style="top:1294.60px;font-size:18px;color:#111;font-weight:700;left:1231.5px;transform:translateX(-100%);">2,031.1394</span>
<span class="t" id="t61" style="top:1294.60px;font-size:18px;color:#1a1a1a;letter-spacing:-1.089px;left:1325px;">max:</span>
<span class="t" id="t62" style="top:1294.60px;font-size:18px;color:#1a1a1a;left:1534px;transform:translateX(-100%);">44,976.0000</span>
</body></html>
